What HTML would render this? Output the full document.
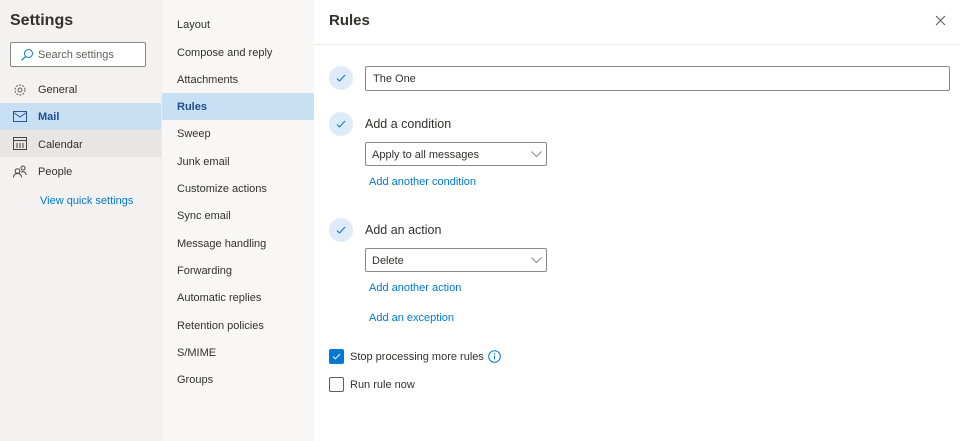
<!DOCTYPE html>
<html><head><meta charset="utf-8"><style>
*{box-sizing:border-box;margin:0;padding:0}
body{width:960px;height:441px;overflow:hidden;font-family:"Liberation Sans",sans-serif;color:#323130;font-size:11px;position:relative;background:#fff}
.a{position:absolute}
#left{left:0;top:0;width:161px;height:441px;background:#f3f2f1}
#mid{left:161px;top:0;width:153px;height:441px;background:#f8f7f6;border-left:1px solid #edebe9}
.t{position:absolute;white-space:nowrap}
.link{color:#0078d4}
.circ{position:absolute;width:24px;height:24px;border-radius:50%;background:#deecf9}
.box{position:absolute;border:1px solid #8a8886;border-radius:2px;background:#fff}
</style></head><body>
<div id="left" class="a">
<div class="t" style="left:10px;top:12px;font-size:16px;font-weight:bold;color:#323130">Settings</div>
<div class="box" style="left:10px;top:42px;width:136px;height:25px;">
<svg class="a" style="left:9px;top:5px" width="14" height="14" viewBox="0 0 14 14"><circle cx="8.5" cy="5.5" r="4" fill="none" stroke="#0078d4" stroke-width="1"/><path d="M5.5 8.5L1.5 12.5" stroke="#0078d4" stroke-width="1.2"/></svg>
<div class="t" style="left:27px;top:6px;color:#605e5c">Search settings</div></div>
<svg class="a" style="left:13px;top:83px" width="14" height="14" viewBox="0 0 14 14"><circle cx="7" cy="7" r="2" fill="none" stroke="#605e5c"/><circle cx="7" cy="7" r="5" fill="none" stroke="#605e5c" stroke-dasharray="2 1.2"/></svg>
<div class="t" style="left:38px;top:84px">General</div>
<div class="a" style="left:0;top:103px;width:161px;height:27px;background:#c7e0f4"></div>
<svg class="a" style="left:13px;top:111px" width="14" height="11" viewBox="0 0 14 11"><rect x="0.5" y="0.5" width="13" height="10" fill="none" stroke="#2b579a"/><path d="M0.5 1.5L7 6L13.5 1.5" fill="none" stroke="#2b579a"/></svg>
<div class="t" style="left:38px;top:111px;color:#1f4e8c;font-weight:bold">Mail</div>
<div class="a" style="left:0;top:130px;width:161px;height:27px;background:#e8e6e4"></div>
<svg class="a" style="left:13px;top:137px" width="14" height="13" viewBox="0 0 14 13"><rect x="0.5" y="0.5" width="13" height="12" fill="none" stroke="#444"/><path d="M0.5 3.5H13.5M4 6v5M7 6v5M10 6v5" stroke="#444"/></svg>
<div class="t" style="left:38px;top:139px">Calendar</div>
<svg class="a" style="left:13px;top:165px" width="14" height="13" viewBox="0 0 14 13"><circle cx="4.5" cy="6" r="2.3" fill="none" stroke="#444"/><circle cx="10" cy="3" r="2" fill="none" stroke="#444"/><path d="M0.5 12.5c0-3 2-4 4-4s4 1 4 4M8 7c2-1 5 0 5 3" fill="none" stroke="#444"/></svg>
<div class="t" style="left:38px;top:166px">People</div>
<div class="t link" style="left:40px;top:195px">View quick settings</div>
</div>
<div id="mid" class="a">
<div class="a" style="left:0;top:93px;width:152px;height:27px;background:#c7e0f4;border-radius:2px"></div>
<div class="t" style="left:15px;top:19px">Layout</div>
<div class="t" style="left:15px;top:47px">Compose and reply</div>
<div class="t" style="left:15px;top:74px">Attachments</div>
<div class="t" style="left:15px;top:101px;color:#1f4e8c;font-weight:bold">Rules</div>
<div class="t" style="left:15px;top:128px">Sweep</div>
<div class="t" style="left:15px;top:156px">Junk email</div>
<div class="t" style="left:15px;top:183px">Customize actions</div>
<div class="t" style="left:15px;top:210px">Sync email</div>
<div class="t" style="left:15px;top:238px">Message handling</div>
<div class="t" style="left:15px;top:265px">Forwarding</div>
<div class="t" style="left:15px;top:292px">Automatic replies</div>
<div class="t" style="left:15px;top:320px">Retention policies</div>
<div class="t" style="left:15px;top:347px">S/MIME</div>
<div class="t" style="left:15px;top:374px">Groups</div>
</div>
<div class="t" style="left:329px;top:12px;font-size:15px;font-weight:bold">Rules</div>
<svg class="a" style="left:935px;top:15px" width="11" height="11" viewBox="0 0 11 11"><path d="M1 1L10 10M10 1L1 10" stroke="#605e5c" stroke-width="1.1"/></svg>
<div class="a" style="left:314px;top:44px;width:646px;height:1px;background:#edebe9"></div>

<div class="circ" style="left:329px;top:66px"></div>
<svg class="a" style="left:335px;top:72px" width="12" height="12" viewBox="0 0 12 12"><path d="M2 6.5L4.5 9L10 3" fill="none" stroke="#0078d4"/></svg>
<div class="box" style="left:365px;top:66px;width:585px;height:25px"><div class="t" style="left:7px;top:6px">The One</div></div>

<div class="circ" style="left:329px;top:112px"></div>
<svg class="a" style="left:335px;top:118px" width="12" height="12" viewBox="0 0 12 12"><path d="M2 6.5L4.5 9L10 3" fill="none" stroke="#0078d4"/></svg>
<div class="t" style="left:365px;top:117px;font-size:12.5px">Add a condition</div>
<div class="box" style="left:365px;top:142px;width:182px;height:24px"><div class="t" style="left:6px;top:6px">Apply to all messages</div>
<svg class="a" style="left:165px;top:8px" width="11" height="7" viewBox="0 0 11 7"><path d="M0.5 0.5L5.5 5.5L10.5 0.5" fill="none" stroke="#8a8886"/></svg></div>
<div class="t link" style="left:369px;top:176px">Add another condition</div>

<div class="circ" style="left:329px;top:218px"></div>
<svg class="a" style="left:335px;top:224px" width="12" height="12" viewBox="0 0 12 12"><path d="M2 6.5L4.5 9L10 3" fill="none" stroke="#0078d4"/></svg>
<div class="t" style="left:365px;top:223px;font-size:12.5px">Add an action</div>
<div class="box" style="left:365px;top:248px;width:182px;height:24px"><div class="t" style="left:6px;top:6px">Delete</div>
<svg class="a" style="left:165px;top:8px" width="11" height="7" viewBox="0 0 11 7"><path d="M0.5 0.5L5.5 5.5L10.5 0.5" fill="none" stroke="#8a8886"/></svg></div>
<div class="t link" style="left:369px;top:282px">Add another action</div>
<div class="t link" style="left:369px;top:312px">Add an exception</div>

<div class="a" style="left:329px;top:349px;width:15px;height:15px;background:#0078d4;border-radius:2px"></div>
<svg class="a" style="left:331px;top:351px" width="11" height="11" viewBox="0 0 11 11"><path d="M2 5.5L4.3 7.8L9 3" fill="none" stroke="#fff"/></svg>
<div class="t" style="left:350px;top:351px">Stop processing more rules</div>
<svg class="a" style="left:488px;top:350px" width="13" height="13" viewBox="0 0 13 13"><circle cx="6.5" cy="6.5" r="5.8" fill="none" stroke="#0078d4"/><path d="M6.5 5.5v4" stroke="#0078d4"/><circle cx="6.5" cy="3.8" r="0.7" fill="#0078d4"/></svg>
<div class="a" style="left:329px;top:377px;width:15px;height:15px;border:1px solid #605e5c;border-radius:2px"></div>
<div class="t" style="left:350px;top:379px">Run rule now</div>
</body></html>
